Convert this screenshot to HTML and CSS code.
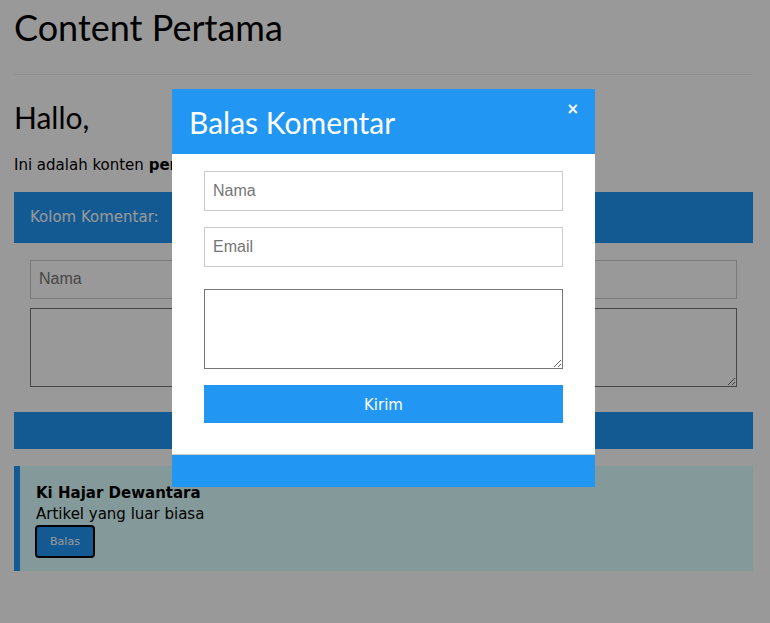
FILE: index.html
```html
<!DOCTYPE html>
<html lang="id">
<head>
<meta charset="utf-8">
<title>Content Pertama</title>
<link rel="stylesheet" href="styles.css">
</head>
<body>
<div class="page">
  <h1 class="title">Content Pertama</h1>
  <hr class="rule">
  <h2 class="greet">Hallo,</h2>
  <p class="intro">Ini adalah konten <b>pertama</b> di halaman ini.</p>
  <div class="comment-head">Kolom Komentar:</div>
  <div class="comment-form">
    <input class="field" type="text" placeholder="Nama">
    <textarea class="area"></textarea>
  </div>
  <button class="send-main">Kirim</button>
  <div class="card">
    <div class="card-name">Ki Hajar Dewantara</div>
    <div class="card-text">Artikel yang luar biasa</div>
    <button class="reply">Balas</button>
  </div>
</div>

<div class="overlay">
  <div class="modal">
    <header class="modal-head">
      <h2 class="modal-title">Balas Komentar</h2>
      <span class="close">&times;</span>
    </header>
    <div class="modal-body">
      <input class="m-field" type="text" placeholder="Nama">
      <input class="m-field" type="text" placeholder="Email">
      <textarea class="m-area"></textarea>
      <button class="m-send">Kirim</button>
    </div>
    <footer class="modal-foot"></footer>
  </div>
</div>
</body>
</html>
```

FILE: styles.css
```css
html, body {
  margin: 0;
  padding: 0;
  background: #ffffff;
}
body {
  font-family: "DejaVu Sans", Verdana, sans-serif;
  font-size: 15px;
  line-height: 1.5;
  color: #000;
}
.page {
  padding: 0 17px 40px 14px;
}
.title {
  font-family: Lato, "Segoe UI", Arial, sans-serif;
  font-weight: 400;
  font-size: 36px;
  line-height: 1.2;
  margin: 0;
  padding-top: 6px;
}
.rule {
  border: 0;
  border-top: 1px solid #eeeeee;
  margin: 25px 0 0 0;
}
.greet {
  font-family: Lato, "Segoe UI", Arial, sans-serif;
  font-weight: 400;
  font-size: 30px;
  line-height: 1.2;
  margin: 24px 0 0 0;
}
.intro {
  margin: 19px 0 0 0;
}
.comment-head {
  margin-top: 15px;
  height: 51px;
  background: #2196F3;
  color: #fff;
  padding-left: 16px;
  display: flex;
  align-items: center;
}
.comment-form {
  padding: 17px 16px 0 16px;
  display: flex;
  flex-direction: column;
}
.field {
  box-sizing: border-box;
  height: 39px;
  border: 1px solid #cccccc;
  padding: 8px;
  font-family: "Liberation Sans", Arial, sans-serif;
  font-size: 16px;
  margin: 0;
}
.field::placeholder, .m-field::placeholder {
  color: #757575;
}
.area {
  box-sizing: border-box;
  margin-top: 9px;
  height: 79px;
  border: 1px solid #767676;
}
.send-main {
  display: block;
  width: 100%;
  margin-top: 25px;
  height: 37px;
  border: 0;
  background: #2196F3;
  color: #fff;
  font-family: "DejaVu Sans", Verdana, sans-serif;
  font-size: 15px;
}
.card {
  margin-top: 17px;
  background: #ddffff;
  border-left: 6px solid #2196F3;
  padding: 17px 16px 14px 16px;
  height: 74px;
}
.card-name {
  font-weight: 700;
  line-height: 20px;
}
.card-text {
  font-size: 15px;
  line-height: 22px;
}
.reply {
  box-sizing: border-box;
  width: 60px;
  height: 33px;
  margin-left: -1px;
  background: #2196F3;
  color: #fff;
  border: 2px solid #000;
  border-radius: 4px;
  font-family: "DejaVu Sans", Verdana, sans-serif;
  font-size: 11px;
  padding: 0;
}

.overlay {
  position: fixed;
  inset: 0;
  background: rgba(0, 0, 0, 0.4);
  padding: 89px 0 0 172px;
}
.modal {
  width: 423px;
  background: #fff;
}
.modal-head {
  position: relative;
  height: 65px;
  background: #2196F3;
  color: #fff;
  padding-left: 17px;
  display: flex;
  align-items: center;
}
.modal-title {
  margin: 0;
  font-family: Lato, "Segoe UI", Arial, sans-serif;
  font-weight: 400;
  font-size: 30px;
  line-height: 1.2;
}
.close {
  position: absolute;
  top: 9px;
  right: 16px;
  font-size: 15px;
  font-weight: 700;
  line-height: 22px;
}
.modal-body {
  padding: 17px 32px 31px 32px;
  display: flex;
  flex-direction: column;
}
.m-field {
  box-sizing: border-box;
  height: 40px;
  border: 1px solid #cccccc;
  padding: 8px;
  font-family: "Liberation Sans", Arial, sans-serif;
  font-size: 16px;
  margin: 0 0 16px 0;
}
.m-field + .m-field {
  margin-bottom: 22px;
}
.m-area {
  box-sizing: border-box;
  height: 80px;
  border: 1px solid #767676;
  margin: 0;
}
.m-send {
  margin-top: 16px;
  height: 38px;
  padding-top: 3px;
  border: 0;
  background: #2196F3;
  color: #fff;
  font-family: "DejaVu Sans", Verdana, sans-serif;
  font-size: 15px;
}
.modal-foot {
  height: 32px;
  border-top: 1px solid #cccccc;
  background: #2196F3;
}
```
